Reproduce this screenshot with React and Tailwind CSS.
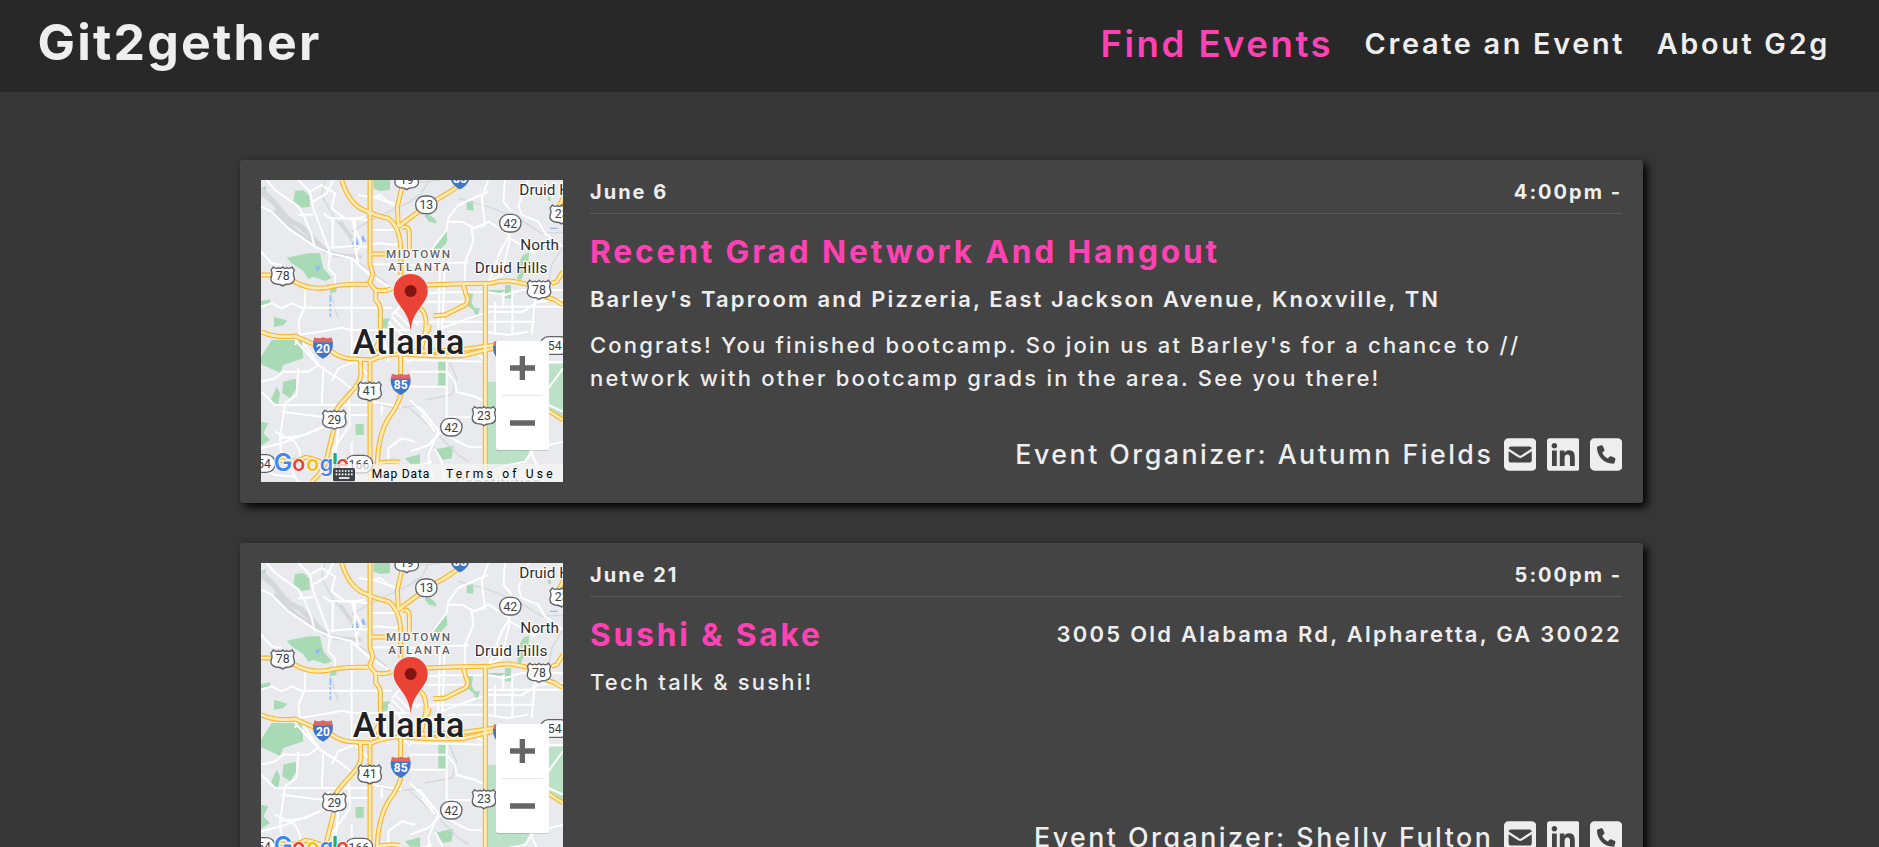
import { FaSquareEnvelope, FaLinkedin, FaSquarePhone } from "react-icons/fa6";

const PARKS = [
  "M120 48L145 45L163 62L165 95L140 98L115 78Z",
  "M355 15L405 15L405 45L375 48L355 40Z",
  "M95 248L160 235L195 235L205 280L230 310L210 318L175 305L160 312L145 288L110 265Z",
  "M18 40L34 33L30 48L18 60Z",
  "M57 425L97 437L85 450L57 456Z",
  "M18 378L45 373L45 385L18 393Z",
  "M225 340L246 338L243 352L225 355Z",
  "M380 432L405 430L395 460L380 460Z",
  "M635 78L655 78L655 107L635 105Z",
  "M512 110L540 132L545 145L522 140L510 125Z",
  "M575 165L577 200L550 230L525 247L530 215L560 185Z",
  "M805 240L822 232L820 270L795 320L787 310L790 265Z",
  "M750 330L768 330L768 370L750 370Z",
  "M635 355L655 350L650 385L660 400L675 400L665 430L655 405L635 390Z",
  "M700 345L750 345L745 353L700 355Z",
  "M880 62L888 70L886 80L879 75Z",
  "M18 545L50 495L140 495L145 550L85 570L75 593L18 568Z",
  "M85 620L122 611L125 640L105 670L82 655Z",
  "M45 680L65 635L75 655L70 688Z",
  "M18 740L40 745L25 775L45 795L18 812Z",
  "M302 747L326 747L326 780L302 780Z",
  "M450 850L495 838L495 866L465 866Z",
  "M550 555L573 555L573 632L550 632Z",
  "M535 815L550 822L595 812L590 850L565 855Z",
];

const PARKS_LIGHT = [
  "M695 620L924 620L924 735L882 708L882 806L825 825L805 865L755 880L695 885Z",
  "M855 570L924 565L924 625L855 625Z",
];

const RAILS = [
  "M18 60Q60 90 90 120T215 228Q300 240 400 330",
  "M210 15L200 60Q215 90 240 130L280 180L300 215",
  "M290 170L340 140L465 80L500 55L520 20",
  "M465 25L560 15",
  "M610 70L700 95L790 130L860 175L924 172",
  "M924 215L890 270L880 330",
  "M465 700L510 740L560 790L610 840L640 860",
  "M510 675L590 660L605 610L580 555",
  "M350 680L420 700L500 690",
  "M250 430L240 400L225 350",
];

const ROADS = [
  "M35 15L60 45L130 95L150 130L170 180L180 220",
  "M18 95L50 110L100 160L180 215L225 235L290 250L345 300L410 340",
  "M130 15L165 50L175 100L205 180L225 235",
  "M165 50L200 30L240 55L230 100L270 130L340 135",
  "M175 80L215 55L235 15",
  "M205 115L225 130L300 130L330 125",
  "M233 130L233 220",
  "M130 120L175 118",
  "M18 230L50 265L80 270",
  "M225 235L220 280L240 300L240 330",
  "M225 218L300 212L330 215L365 205L420 210L437 200",
  "M290 250L290 480L290 555",
  "M300 130L300 215L310 270L345 300",
  "M305 230L320 200L300 165L290 130",
  "M310 60L370 70L430 95",
  "M345 70L375 60L400 80L430 90",
  "M345 165L430 165",
  "M18 395L50 385L80 400L110 385L140 398L410 398",
  "M150 340L150 395L130 440L135 480L120 510",
  "M130 480L210 468L260 458L290 465L465 465",
  "M345 268L437 268",
  "M410 420L440 390L480 370L500 340",
  "M400 440L440 480M410 425L450 465M420 410L470 460M440 400L490 450",
  "M465 270L640 262",
  "M465 360L560 352L700 352L750 360L800 345L924 345",
  "M700 15L680 70L690 150L650 160L655 200L630 262L630 325",
  "M465 300L510 250L540 210L575 165L580 130L610 90L700 50",
  "M580 140L620 140L660 160L700 140L765 180L740 220L700 325",
  "M820 15L790 90L800 120L850 140L870 175L924 215",
  "M770 110L745 80L750 15",
  "M765 190L840 235",
  "M765 190L740 300L690 325",
  "M555 262L550 460M570 262L562 460",
  "M465 380L640 380M465 440L700 440",
  "M560 460L640 430L700 410L800 412L850 380L924 375",
  "M720 380L720 480M745 350L745 400M772 345L772 480M840 370L830 480",
  "M690 395L924 395M700 440L840 440",
  "M580 470L690 470L760 480L820 470",
  "M140 495L195 575L250 610L300 650L350 680L440 695",
  "M120 495L190 570L160 590L85 590L60 610L18 620",
  "M18 650L60 690L350 690",
  "M130 580L125 660L90 685L75 790L80 860",
  "M75 790L150 780L240 740L260 725",
  "M60 770L120 800L135 830L135 860",
  "M18 820L80 805L170 770L240 740",
  "M80 710L200 725L225 700",
  "M205 575L200 690",
  "M230 620L250 580L300 560",
  "M300 500L300 560L340 600",
  "M280 650L285 750L230 830",
  "M250 760L240 860L260 900",
  "M18 880L60 900L120 905M100 870L130 921",
  "M270 720L340 720",
  "M290 800L290 870M380 690L380 720",
  "M400 865L400 820L440 790L480 800",
  "M465 590L575 590M465 635L570 635",
  "M575 555L575 765M465 555L700 560",
  "M575 590L600 620L605 650L660 665L690 680",
  "M575 727L650 727M465 675L510 720L550 765L520 840L535 921",
  "M465 830L520 810L560 770L600 795L640 815L680 817",
  "M490 690L530 740L530 760M500 720L540 770",
  "M465 880L530 860M540 820L560 860L570 921",
  "M385 480L400 560M405 520L465 560",
  "M640 520L700 560M690 470L690 520",
  "M840 560L924 562M924 580L880 640",
  "M700 890L760 870L810 860L840 820L924 800",
  "M825 825L850 880L870 921",
  "M880 690L924 710",
];

const HIGHWAYS = [
  "M260 15Q280 80 320 102Q370 125 400 130Q440 160 437 240L437 300",
  "M345 15L345 270Q360 300 345 318Q342 325 362 346L362 375Q378 390 376 410L376 550",
  "M430 155Q490 110 530 82Q580 55 600 40L620 25",
  "M440 40L427 95L430 155",
  "M440 158Q463 150 463 175L463 230",
  "M18 300L60 300M115 318Q160 345 215 338Q260 325 340 328",
  "M362 346Q395 350 410 340",
  "M350 237L400 237",
  "M515 330L620 326L705 325Q750 312 790 322L830 330Q850 360 900 375L924 390",
  "M625 326L632 355Q648 385 620 395L570 420L535 422",
  "M691 325L691 921",
  "M924 290L905 320L890 325",
  "M924 70L912 95",
  "M497 400Q518 420 512 465L495 540",
  "M18 470Q60 490 120 483Q170 505 230 530Q260 552 300 552L350 555Q400 530 480 540L545 543L625 542L705 522L740 515",
  "M465 530L620 524L720 510",
  "M316 555L318 600Q315 625 285 655L250 695L242 710",
  "M236 765L215 850Q205 890 170 921",
  "M345 555L345 921",
  "M437 540L437 660Q430 690 400 730Q370 780 367 860L363 885",
  "M75 856Q120 865 150 847Q175 850 210 866M367 865Q400 858 435 862",
  "M882 708L924 735",
  "M500 490L520 465L522 450M350 540L372 500",
];

const US_SHIELD =
  "M-28 -27Q-20 -20 -12 -25Q-6 -20 0 -27Q6 -20 12 -25Q20 -20 28 -27L35 -18Q29 -8 35 4Q37 20 20 24Q6 24 0 30Q-6 24 -20 24Q-37 20 -35 4Q-29 -8 -35 -18Z";

function ShieldText({ n }) {
  return (
    <text y="13" textAnchor="middle" fontSize="37" fill="#3c4043">
      {n}
    </text>
  );
}

function UsShield({ x, y, n }) {
  return (
    <g transform={`translate(${x} ${y})`}>
      <path d={US_SHIELD} fill="#fff" stroke="#5f6368" strokeWidth="4" />
      <ShieldText n={n} />
    </g>
  );
}

function StateShield({ x, y, n, w = 64 }) {
  return (
    <g transform={`translate(${x} ${y})`}>
      <rect x={-w / 2} y="-27" width={w} height="53" rx="26" fill="#fff" stroke="#5f6368" strokeWidth="4" />
      <ShieldText n={n} />
    </g>
  );
}

function Interstate({ x, y, n }) {
  return (
    <g transform={`translate(${x} ${y})`}>
      <path d="M-26 -34Q-13 -28 0 -34Q13 -28 26 -34L30 -18L-30 -18Z" fill="#e06666" />
      <path d="M-30 -19L30 -19Q32 15 0 30Q-32 15 -30 -19Z" fill="#3f76c9" />
      <text y="12" textAnchor="middle" fontSize="36" fontWeight="700" fill="#fff">
        {n}
      </text>
    </g>
  );
}

function MapLabel(props) {
  return (
    <text fill="#2b2e31" stroke="#fff" strokeWidth="7" strokeLinejoin="round" paintOrder="stroke" {...props} />
  );
}

function EventMap() {
  return (
    <div className="h-[302px] w-[302px] shrink-0 overflow-hidden">
      <svg viewBox="18 15 906 906" className="block h-[302px] w-[302px]" fontFamily="Roboto, sans-serif" letterSpacing="0">
        <rect x="18" y="15" width="906" height="906" fill="#e8eaed" />
        {PARKS.map((d) => (
          <path key={d} d={d} fill="#a8dab5" />
        ))}
        {PARKS_LIGHT.map((d) => (
          <path key={d} d={d} fill="#bbe2c6" />
        ))}
        <path d="M290 205L305 190L315 215L295 219ZM317 190L325 180L333 200L318 200ZM179 275L199 272L187 290ZM885 158L908 158L908 162L885 162Z" fill="#90bbf9" />
        <path d="M226 360L226 425" stroke="#90bbf9" strokeWidth="5" strokeDasharray="22 5" />
        <g fill="none" stroke="#d5d8db">
          <path d="M18 45Q50 70 75 105T140 155L215 232" strokeWidth="16" />
          <path d="M60 105Q110 175 215 225" strokeWidth="14" />
          {RAILS.map((d) => (
            <path key={d} d={d} strokeWidth="4" />
          ))}
          <path d="M255 140L290 190M235 240L320 245" strokeWidth="12" />
        </g>
        <g fill="none" stroke="#fff" strokeWidth="6" strokeLinejoin="round">
          {ROADS.map((d) => (
            <path key={d} d={d} />
          ))}
        </g>
        <g fill="none" strokeLinejoin="round">
          {HIGHWAYS.map((d) => (
            <path key={d} d={d} stroke="#fab62c" strokeWidth="15" />
          ))}
          {HIGHWAYS.map((d) => (
            <path key={d} d={d} stroke="#ffebb5" strokeWidth="8" />
          ))}
        </g>

        <StateShield x={514} y={90} n="13" />
        <StateShield x={766} y={145} n="42" />
        <StateShield x={589} y={757} n="42" />
        <StateShield x={899} y={512} n="54" w={88} />
        <StateShield x={27} y={866} n="54" w={68} />
        <StateShield x={312} y={868} n="166" w={82} />
        <UsShield x={455} y={14} n="19" />
        <UsShield x={83} y={303} n="78" />
        <UsShield x={852} y={343} n="78" />
        <UsShield x={920} y={117} n="23" />
        <UsShield x={687} y={722} n="23" />
        <UsShield x={344} y={648} n="41" />
        <UsShield x={238} y={733} n="29" />
        <Interstate x={204} y={521} n="20" />
        <Interstate x={437} y={630} n="85" />
        <Interstate x={615} y={13} n="85" />
        <Interstate x={744} y={532} n="" />

        <MapLabel x="393" y="250" fontSize="35" fontWeight="500" fill="#5f6368" textLength="192">MIDTOWN</MapLabel>
        <MapLabel x="400" y="288" fontSize="35" fontWeight="500" fill="#5f6368" textLength="184">ATLANTA</MapLabel>
        <MapLabel x="793" y="60" fontSize="46">Druid Hills</MapLabel>
        <MapLabel x="796" y="225" fontSize="46">North</MapLabel>
        <MapLabel x="659" y="295" fontSize="46" textLength="218">Druid Hills</MapLabel>
        <MapLabel x="293" y="537" fontSize="104" fontWeight="500" fill="#202124" strokeWidth="8" textLength="335">Atlanta</MapLabel>
        <MapLabel x="602" y="938" fontSize="42" fill="#757a80" textLength="255">Constitution</MapLabel>

        <path d="M467 467C462 425 452 418 432 388C422 373 416 364 416 348A51 51 0 0 1 518 348C518 364 512 373 502 388C482 418 472 425 467 467Z" fill="#ea4335" />
        <circle cx="467" cy="348" r="18" fill="#811411" />

        <text y="888" fontFamily="Inter, sans-serif" fontSize="74" fontWeight="600" stroke="#fff" strokeWidth="5" paintOrder="stroke">
          <tspan x="56" fill="#4285f4">G</tspan>
          <tspan x="112" fontSize="64" fill="#ea4335">o</tspan>
          <tspan x="154" fontSize="64" fill="#fbbc04">o</tspan>
          <tspan x="194" fontSize="64" fill="#4285f4">g</tspan>
          <tspan x="230" fill="#34a853">l</tspan>
          <tspan x="244" fontSize="64" fill="#ea4335">e</tspan>
        </text>

        <rect x="232" y="867" width="692" height="54" fill="#f5f5f5" fillOpacity="0.72" />
        <rect x="234" y="879" width="66" height="40" rx="5" fill="#3f4246" />
        <path d="M242 888H294M242 898H294" stroke="#fff" strokeWidth="5" strokeDasharray="5 4.2" />
        <path d="M252 909H283" stroke="#fff" strokeWidth="5" />
        <text x="350" y="909" fontSize="36" fill="#000" textLength="173">Map Data</text>
        <text x="573" y="909" fontSize="36" fill="#000" textLength="320">Terms of Use</text>

        <rect x="723" y="500" width="159" height="328" rx="6" fill="#000" fillOpacity="0.15" />
        <rect x="723" y="498" width="159" height="327" rx="6" fill="#fff" />
        <path d="M741 661.5H863" stroke="#e6e6e6" strokeWidth="3" />
        <path d="M765 579H840M802 543V615M765 744H840" stroke="#666" strokeWidth="16" />
      </svg>
    </div>
  );
}

function EventCard({ date, time, title, location, locationTracking, description, organizer }) {
  return (
    <article className="flex h-[343px] rounded-[3px] bg-[#444] pt-5 pr-[21px] pb-[21px] pl-[21px] shadow-[4px_4px_8px_#000]">
      <EventMap />
      <div className="ml-[27px] flex min-w-0 flex-1 flex-col">
        <div className="flex h-[34px] justify-between border-b border-[#5a5a5a] text-[20px] leading-[25px] font-bold tracking-[0.1em]">
          <span>{date}</span>
          <span>{time}</span>
        </div>
        <div className="mt-4 flex flex-wrap items-center justify-between gap-y-2">
          <h2 className="text-[31.7px] leading-[43px] font-bold tracking-[2.85px] text-[#ff42b3]">{title}</h2>
          <p className={`pb-0.5 text-[22px] leading-9 font-semibold ${locationTracking}`}>{location}</p>
        </div>
        <p className="mt-[9.5px] text-[22px] leading-[33px] font-medium tracking-[0.1em] whitespace-pre-line">{description}</p>
        <div className="mt-auto mb-2 flex items-center justify-end gap-[10.5px]">
          <span className="text-[26.8px] leading-10 font-medium tracking-[2.48px]">{organizer}</span>
          <FaSquareEnvelope className="h-[37px] w-[32.4px]" />
          <FaLinkedin className="h-[37px] w-[32.4px]" />
          <FaSquarePhone className="h-[37px] w-[32.4px]" />
        </div>
      </div>
    </article>
  );
}

const EVENTS = [
  {
    date: "June 6",
    time: "4:00pm -",
    title: "Recent Grad Network And Hangout",
    location: "Barley's Taproom and Pizzeria, East Jackson Avenue, Knoxville, TN",
    locationTracking: "tracking-[2.1px]",
    description:
      "Congrats! You finished bootcamp. So join us at Barley's for a chance to //\nnetwork with other bootcamp grads in the area. See you there!",
    organizer: "Event Organizer: Autumn Fields",
  },
  {
    date: "June 21",
    time: "5:00pm -",
    title: "Sushi & Sake",
    location: "3005 Old Alabama Rd, Alpharetta, GA 30022",
    locationTracking: "tracking-[2.24px]",
    description: "Tech talk & sushi!",
    organizer: "Event Organizer: Shelly Fulton",
  },
];

export default function App() {
  return (
    <div className="h-[847px] overflow-hidden bg-[#363636] font-['Inter',sans-serif] text-[#eee]">
      <header className="flex h-[92px] items-center justify-between bg-[#282828] pr-[49px] pl-[37.5px]">
        <h1 className="pb-2 text-[50px] leading-none font-bold tracking-[2.2px]">Git2gether</h1>
        <nav className="flex items-center gap-[31.5px] pb-1 text-[28.8px] font-semibold tracking-[2.7px]">
          <a className="text-[36.6px] leading-10 tracking-[2.5px] text-[#ff42b3]">Find Events</a>
          <a>Create an Event</a>
          <a>About G2g</a>
        </nav>
      </header>
      <main className="flex flex-col gap-10 pt-[68px] pr-[236px] pl-60">
        {EVENTS.map((e) => (
          <EventCard key={e.title} {...e} />
        ))}
      </main>
    </div>
  );
}
